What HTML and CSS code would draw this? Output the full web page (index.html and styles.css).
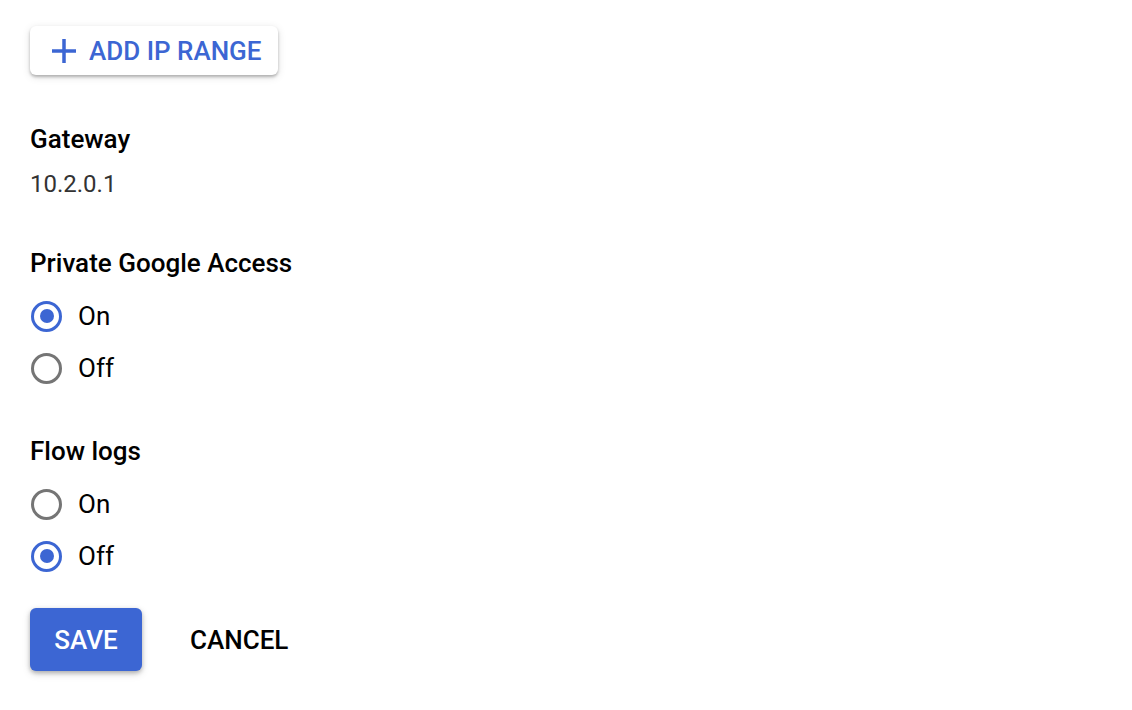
FILE: index.html
```html
<!doctype html>
<html lang="en">
<head>
	<meta charset="UTF-8">
	<title>Subnet</title>
	<link rel="stylesheet" href="styles.css">
</head>
<body>
	<div class="panel">
		<button class="addBtn" type="button">
			<svg class="plus" width="24" height="24" viewBox="0 0 24 24"><path d="M10.25 0h3.5v10.25H24v3.5H13.75V24h-3.5V13.75H0v-3.5h10.25z" fill="currentColor"/></svg>
			<span>ADD IP RANGE</span>
		</button>

		<div class="field">
			<div class="label">Gateway</div>
			<div class="value">10.2.0.1</div>
		</div>

		<div class="field group">
			<div class="label">Private Google Access</div>
			<label class="radio"><input type="radio" name="pga" checked><i></i><em>On</em></label>
			<label class="radio"><input type="radio" name="pga"><i></i><em>Off</em></label>
		</div>

		<div class="field group">
			<div class="label">Flow logs</div>
			<label class="radio"><input type="radio" name="flow"><i></i><em>On</em></label>
			<label class="radio"><input type="radio" name="flow" checked><i></i><em>Off</em></label>
		</div>

		<div class="actions">
			<button class="save" type="button">SAVE</button>
			<button class="cancel" type="button">CANCEL</button>
		</div>
	</div>
</body>
</html>
```

FILE: styles.css
```css
*{margin:0; padding:0; box-sizing:border-box;}
em,i{font-style:normal;}
body{
	background:#fff;
	font-family:Roboto, "Liberation Sans", Arial, sans-serif;
	color:#000;
}

.panel{
	padding:26px 30px;
	display:flex;
	flex-direction:column;
	align-items:flex-start;
}

.addBtn{
	display:flex;
	align-items:center;
	gap:13px;
	height:49px;
	padding:0 16px 0 22px;
	border:none;
	border-radius:6px;
	background:#fff;
	color:#3c66d3;
	font-family:inherit;
	font-size:26px;
	font-weight:500;
	box-shadow:0 2px 3px rgba(0,0,0,0.25), 0 2px 8px rgba(0,0,0,0.12);
	cursor:pointer;
}
.plus{display:block;}

.field{margin-top:48px;}
.field.group{margin-top:47px;}
.group + .group{margin-top:41px;}
.label{
	font-size:26px;
	font-weight:500;
	line-height:32px;
}
.value{
	margin-top:13px;
	font-size:24px;
	line-height:32px;
	color:#333;
}

.group .label{margin-bottom:11px;}
.radio{
	display:flex;
	align-items:center;
	height:52px;
	font-size:26px;
	cursor:pointer;
}
.radio input{display:none;}
.radio i{
	width:31px;
	height:31px;
	border:3.5px solid #757575;
	border-radius:50%;
	margin-left:1px;
	margin-right:16px;
	display:flex;
	align-items:center;
	justify-content:center;
}
.radio input:checked + i{border-color:#3c66d3;}
.radio input:checked + i:after{
	content:'';
	width:14px;
	height:14px;
	border-radius:50%;
	background:#3c66d3;
}

.actions{
	margin-top:26px;
	display:flex;
	align-items:center;
	gap:24px;
}
.save{
	width:112px;
	height:63px;
	border:none;
	border-radius:6px;
	background:#3c66d3;
	color:#fff;
	font-family:inherit;
	font-size:26px;
	font-weight:500;
	box-shadow:0 2px 4px rgba(0,0,0,0.25), 0 3px 8px rgba(0,0,0,0.12);
	cursor:pointer;
}
.cancel{
	height:63px;
	padding:0 24px;
	border:none;
	background:none;
	color:#000;
	font-family:inherit;
	font-size:26px;
	font-weight:500;
	cursor:pointer;
}
```
